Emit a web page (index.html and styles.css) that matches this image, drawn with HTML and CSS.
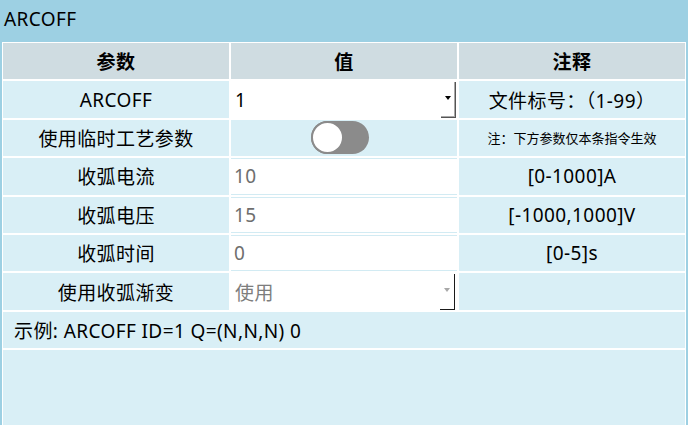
FILE: index.html
```html
<!DOCTYPE html>
<html lang="zh">
<head>
<meta charset="utf-8">
<title>ARCOFF</title>
<link rel="stylesheet" href="styles.css">
</head>
<body>
<div class="title">ARCOFF</div>
<div class="panel">
  <div class="cell head">参数</div>
  <div class="cell head">值</div>
  <div class="cell head">注释</div>

  <div class="cell name">ARCOFF</div>
  <div class="cell val"><div class="combo"><span class="combo-text">1</span><span class="combo-btn"><span class="arrow"></span></span></div></div>
  <div class="cell note">文件标号：（1-99）</div>

  <div class="cell name">使用临时工艺参数</div>
  <div class="cell val toggle-cell"><div class="toggle"><span class="knob"></span></div></div>
  <div class="cell note small">注：下方参数仅本条指令生效</div>

  <div class="cell name">收弧电流</div>
  <div class="cell val"><div class="input">10</div></div>
  <div class="cell note">[0-1000]A</div>

  <div class="cell name">收弧电压</div>
  <div class="cell val"><div class="input">15</div></div>
  <div class="cell note">[-1000,1000]V</div>

  <div class="cell name">收弧时间</div>
  <div class="cell val"><div class="input">0</div></div>
  <div class="cell note">[0-5]s</div>

  <div class="cell name">使用收弧渐变</div>
  <div class="cell val"><div class="combo disabled"><span class="combo-text">使用</span><span class="combo-btn"><span class="arrow"></span></span></div></div>
  <div class="cell note"></div>

  <div class="cell example">示例: ARCOFF ID=1 Q=(N,N,N) 0</div>
  <div class="cell filler"></div>
</div>
</body>
</html>
```

FILE: styles.css
```css
html, body {
  margin: 0;
  padding: 0;
}
body {
  width: 688px;
  height: 425px;
  overflow: hidden;
  background: #9dd0e3;
  font-family: "Noto Sans", "Noto Sans CJK SC", sans-serif;
  font-size: 19px;
  letter-spacing: 0.4px;
  color: #000;
}
.title {
  height: 42px;
  line-height: 38px;
  padding-left: 4px;
  box-sizing: border-box;
}
.panel {
  margin-left: 2px;
  width: 684px;
  height: 383px;
  box-sizing: border-box;
  background: #ffffff;
  padding: 1px 1px 0 1px;
  display: grid;
  grid-template-columns: 226px 226px 226px;
  grid-template-rows: repeat(8, 36.4px) 1fr;
  column-gap: 2px;
  row-gap: 2px;
}
.cell {
  background: #d9eff6;
  display: flex;
  align-items: center;
  min-width: 0;
  overflow: hidden;
  white-space: nowrap;
}
.head {
  background: #cfdce1;
  font-weight: bold;
  justify-content: center;
}
.name, .note {
  justify-content: center;
}
.note.small {
  font-size: 13px;
  letter-spacing: 0;
}
.val {
  align-items: stretch;
}
.combo {
  flex: 1;
  display: flex;
  align-items: center;
  background: #ffffff;
  position: relative;
}
.combo-text {
  flex: 1;
  padding-left: 4px;
}
.combo-btn {
  width: 14px;
  align-self: stretch;
  margin-top: 1px;
  display: flex;
  align-items: center;
  justify-content: center;
  border-right: 1px solid #555555;
  border-bottom: 1px solid #555555;
  box-shadow: inset -1px -1px 0 #a8a8a8;
  margin-right: 1px;
}
.arrow {
  width: 0;
  height: 0;
  border-left: 3.5px solid transparent;
  border-right: 3.5px solid transparent;
  border-top: 4px solid #000000;
  margin-top: -3px;
}
.combo.disabled {
  margin-left: -2px;
  color: #7d7d7d;
}
.combo.disabled .combo-text {
  padding-left: 6px;
}
.combo.disabled .combo-btn {
  border-right-color: #1a1a1a;
  border-bottom-color: #1a1a1a;
  box-shadow: none;
  margin-right: 2px;
}
.combo.disabled .arrow {
  border-top-color: #a8a8a8;
}
.toggle-cell {
  align-items: center;
  justify-content: center;
  padding-right: 9px;
}
.toggle {
  width: 58px;
  height: 33px;
  border-radius: 17px;
  background: #8b8b8b;
  position: relative;
}
.knob {
  position: absolute;
  left: 0;
  top: 0;
  width: 33px;
  height: 33px;
  box-sizing: border-box;
  border-radius: 50%;
  background: #ffffff;
  border: 2px solid #8b8b8b;
}
.input {
  flex: 1;
  display: flex;
  align-items: center;
  background: #ffffff;
  border: 1px solid #d2ebf3;
  margin: 0 -1px;
  padding-left: 3px;
  color: #6e6e6e;
}
.example {
  grid-column: 1 / 4;
  padding-left: 11px;
}
.filler {
  grid-column: 1 / 4;
}
```
